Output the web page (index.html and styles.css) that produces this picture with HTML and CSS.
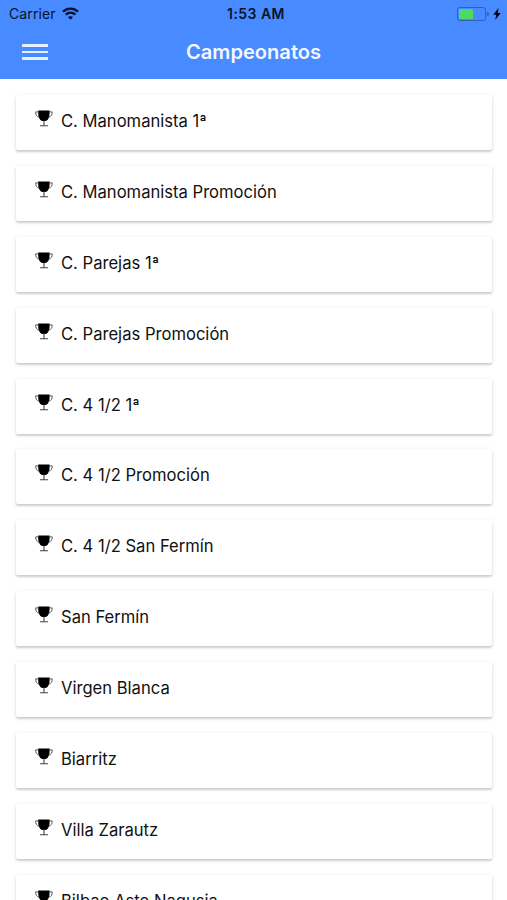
FILE: index.html
```html
<!DOCTYPE html>
<html lang="es">
<head>
<meta charset="utf-8">
<title>Campeonatos</title>
<link rel="stylesheet" href="styles.css">
</head>
<body>
<svg class="defs" aria-hidden="true">
  <symbol id="trophy" viewBox="0 0 18 17">
    <path d="M3.200.5h11.400c.2 5.500-.6 9.300-4 10.600H7.200C3.800 9.800 3 6 3.200.5z"/>
    <path d="M3.500 1.900H.7c-.2 2.700 1.200 5 3.700 5.400M14.300 1.900h2.900c.2 2.700-1.200 5-3.700 5.400" fill="none" stroke="#444" stroke-width=".9"/>
    <path d="M8.400 10.500h1.100v4.900H8.400zM5 15.200h8v1H5z" fill="#444"/>
  </symbol>
</svg>
<header class="header">
  <div class="status">
    <div class="status-left">
      <span class="carrier">Carrier</span>
      <svg class="wifi" viewBox="0 0 17 13">
        <path d="M1 4.700C5.300.6 11.700.6 16 4.700M3.700 7.700c2.800-2.600 6.800-2.600 9.600 0" fill="none" stroke="#07142b" stroke-width="2.400"/>
        <path d="M8.500 12.700 5.900 10.100c1.500-1.300 3.700-1.300 5.200 0z" fill="#07142b"/>
      </svg>
    </div>
    <span class="clock">1:53 AM</span>
    <div class="status-right">
      <span class="battery"><span class="charge"></span></span>
      <span class="cap"></span>
      <svg class="bolt" viewBox="0 0 8 12"><path d="M5.500 0 .3 6.700h3L2.200 12 7.700 5h-3z"/></svg>
    </div>
  </div>
  <div class="toolbar">
    <div class="menu"><span></span><span></span><span></span></div>
    <h1 class="title">Campeonatos</h1>
  </div>
</header>
<main class="list">
  <div class="card"><svg class="trophy"><use href="#trophy"/></svg><span class="name">C. Manomanista 1ª</span></div>
  <div class="card"><svg class="trophy"><use href="#trophy"/></svg><span class="name">C. Manomanista Promoción</span></div>
  <div class="card"><svg class="trophy"><use href="#trophy"/></svg><span class="name">C. Parejas 1ª</span></div>
  <div class="card"><svg class="trophy"><use href="#trophy"/></svg><span class="name">C. Parejas Promoción</span></div>
  <div class="card"><svg class="trophy"><use href="#trophy"/></svg><span class="name">C. 4 1/2 1ª</span></div>
  <div class="card"><svg class="trophy"><use href="#trophy"/></svg><span class="name">C. 4 1/2 Promoción</span></div>
  <div class="card"><svg class="trophy"><use href="#trophy"/></svg><span class="name">C. 4 1/2 San Fermín</span></div>
  <div class="card"><svg class="trophy"><use href="#trophy"/></svg><span class="name">San Fermín</span></div>
  <div class="card"><svg class="trophy"><use href="#trophy"/></svg><span class="name">Virgen Blanca</span></div>
  <div class="card"><svg class="trophy"><use href="#trophy"/></svg><span class="name">Biarritz</span></div>
  <div class="card"><svg class="trophy"><use href="#trophy"/></svg><span class="name">Villa Zarautz</span></div>
  <div class="card"><svg class="trophy"><use href="#trophy"/></svg><span class="name">Bilbao Aste Nagusia</span></div>
</main>
</body>
</html>
```
FILE: styles.css
```css
* { box-sizing: border-box; }
body {
  margin: 0;
  height: 900px;
  overflow: hidden;
  background: #fff;
  color: #111;
  font-family: Inter, "Liberation Sans", sans-serif;
}
.defs { display: none; }
.header {
  height: 79px;
  background: #488aff;
}
.status {
  display: grid;
  grid-template-columns: 1fr auto 1fr;
  align-items: center;
  height: 27px;
  padding: 0 6px 0 9px;
  color: #07142b;
}
.status-left, .status-right { display: flex; align-items: center; }
.status-right { justify-content: flex-end; }
.carrier { font-size: 14px; letter-spacing: 0.1px; }
.wifi { width: 17px; height: 13px; margin-left: 6px; }
.clock { font-size: 14px; font-weight: 600; letter-spacing: 0.450px; margin-left: 2px; }
.battery {
  width: 29px;
  height: 14px;
  padding: 1px;
  border: 1px solid #2f5fb8;
  border-radius: 3px;
}
.charge { display: block; width: 14px; height: 10px; background: #4cd964; border-radius: 1px; }
.cap { width: 2px; height: 4px; margin: 0 4px 0 1px; background: #2f5fb8; border-radius: 0 2px 2px 0; }
.bolt { width: 8px; height: 12px; }
.toolbar {
  display: grid;
  grid-template-columns: 1fr auto 1fr;
  align-items: center;
  height: 50px;
  padding: 0 22px;
}
.menu { display: flex; flex-direction: column; gap: 4px; width: 26px; }
.menu span { height: 2.400px; background: #e6f0ff; }
.title { margin: 0; font-size: 20.100px; line-height: 28px; font-weight: 600; color: #f4f8ff; }
.list { display: flex; flex-direction: column; gap: 15.900px; padding: 16px 15px 0 16px; }
.card {
  display: flex;
  flex: none;
  align-items: flex-start;
  height: 55px;
  padding: 15px 19px 0 18.600px;
  border-radius: 2px;
  background: #fff;
  box-shadow: 0 2px 2px rgba(0,0,0,.14), 0 1px 4px rgba(0,0,0,.1);
}
.trophy { width: 18px; height: 17px; margin-right: 8.400px; }
.name { font-size: 16.600px; line-height: 22px; white-space: nowrap; }
```
